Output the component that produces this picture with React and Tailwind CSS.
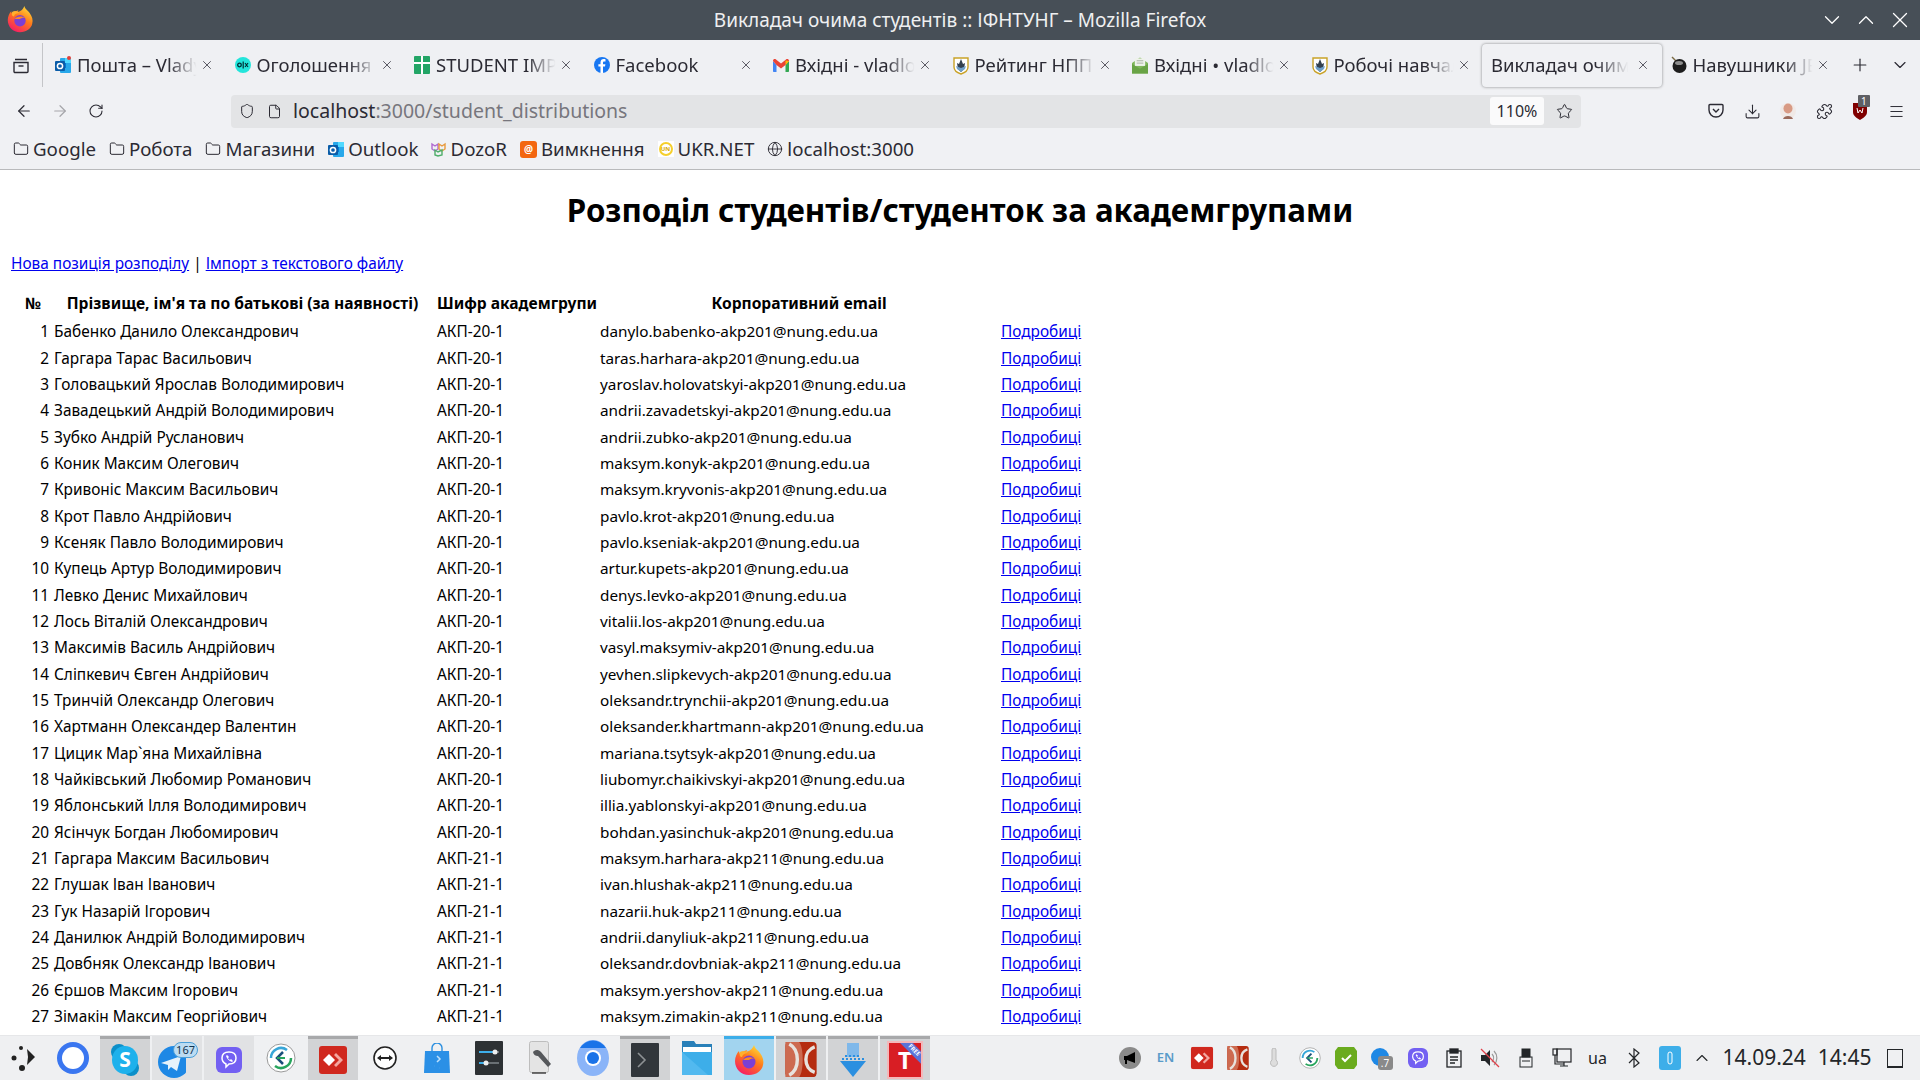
import {
  ArrowLeft,
  ArrowRight,
  ChevronDown,
  ChevronUp,
  Download,
  File,
  Folder,
  Globe,
  Menu,
  Plus,
  Puzzle,
  RotateCw,
  Shield,
  Star,
  X,
} from 'lucide-react';

const students = [
  ['Бабенко Данило Олександрович', 'АКП-20-1', 'danylo.babenko-akp201@nung.edu.ua'],
  ['Гаргара Тарас Васильович', 'АКП-20-1', 'taras.harhara-akp201@nung.edu.ua'],
  ['Головацький Ярослав Володимирович', 'АКП-20-1', 'yaroslav.holovatskyi-akp201@nung.edu.ua'],
  ['Завадецький Андрій Володимирович', 'АКП-20-1', 'andrii.zavadetskyi-akp201@nung.edu.ua'],
  ['Зубко Андрій Русланович', 'АКП-20-1', 'andrii.zubko-akp201@nung.edu.ua'],
  ['Коник Максим Олегович', 'АКП-20-1', 'maksym.konyk-akp201@nung.edu.ua'],
  ['Кривоніс Максим Васильович', 'АКП-20-1', 'maksym.kryvonis-akp201@nung.edu.ua'],
  ['Крот Павло Андрійович', 'АКП-20-1', 'pavlo.krot-akp201@nung.edu.ua'],
  ['Ксеняк Павло Володимирович', 'АКП-20-1', 'pavlo.kseniak-akp201@nung.edu.ua'],
  ['Купець Артур Володимирович', 'АКП-20-1', 'artur.kupets-akp201@nung.edu.ua'],
  ['Левко Денис Михайлович', 'АКП-20-1', 'denys.levko-akp201@nung.edu.ua'],
  ['Лось Віталій Олександрович', 'АКП-20-1', 'vitalii.los-akp201@nung.edu.ua'],
  ['Максимів Василь Андрійович', 'АКП-20-1', 'vasyl.maksymiv-akp201@nung.edu.ua'],
  ['Сліпкевич Євген Андрійович', 'АКП-20-1', 'yevhen.slipkevych-akp201@nung.edu.ua'],
  ['Тринчій Олександр Олегович', 'АКП-20-1', 'oleksandr.trynchii-akp201@nung.edu.ua'],
  ['Хартманн Олександер Валентин', 'АКП-20-1', 'oleksander.khartmann-akp201@nung.edu.ua'],
  ['Цицик Мар`яна Михайлівна', 'АКП-20-1', 'mariana.tsytsyk-akp201@nung.edu.ua'],
  ['Чайківський Любомир Романович', 'АКП-20-1', 'liubomyr.chaikivskyi-akp201@nung.edu.ua'],
  ['Яблонський Ілля Володимирович', 'АКП-20-1', 'illia.yablonskyi-akp201@nung.edu.ua'],
  ['Ясінчук Богдан Любомирович', 'АКП-20-1', 'bohdan.yasinchuk-akp201@nung.edu.ua'],
  ['Гаргара Максим Васильович', 'АКП-21-1', 'maksym.harhara-akp211@nung.edu.ua'],
  ['Глушак Іван Іванович', 'АКП-21-1', 'ivan.hlushak-akp211@nung.edu.ua'],
  ['Гук Назарій Ігорович', 'АКП-21-1', 'nazarii.huk-akp211@nung.edu.ua'],
  ['Данилюк Андрій Володимирович', 'АКП-21-1', 'andrii.danyliuk-akp211@nung.edu.ua'],
  ['Довбняк Олександр Іванович', 'АКП-21-1', 'oleksandr.dovbniak-akp211@nung.edu.ua'],
  ['Єршов Максим Ігорович', 'АКП-21-1', 'maksym.yershov-akp211@nung.edu.ua'],
  ['Зімакін Максим Георгійович', 'АКП-21-1', 'maksym.zimakin-akp211@nung.edu.ua'],
];

const FirefoxLogo = ({ size = 28 }) => (
  <svg width={size} height={size} viewBox="0 0 32 32">
    <defs>
      <linearGradient id="ffa" x1="0.8" y1="0" x2="0.2" y2="1">
        <stop offset="0" stopColor="#ffe03a" />
        <stop offset="0.45" stopColor="#ff7a1a" />
        <stop offset="1" stopColor="#f5156c" />
      </linearGradient>
    </defs>
    <path d="M21 1c1 4 4 5 6 8 3 4 4 8 3 12-1 6-7 10-14 10C8 31 2 25 2 17c0-4 2-8 4-10 0 2 1 3 2 4 1-3 3-4 6-5 0 1-1 2-1 2 3-1 6-2 8-7z" fill="url(#ffa)" />
    <path d="M7 8c3-2 6-1 8 1-3 0-5 1-6 4-2 0-3-2-2-5z" fill="#ffb02e" />
    <circle cx="16" cy="18" r="6.5" fill="#7b3fd4" />
    <path d="M10 16c2-3 8-4 12-1-2-1-5 0-6 1l-6 0z" fill="#ff8a1e" />
  </svg>
);

const OutlookIcon = () => (
  <svg width="16" height="17" viewBox="0 0 16 17">
    <rect x="5" y="1" width="11" height="15" rx="1" fill="#28a8ea" />
    <rect x="10" y="1" width="6" height="5" fill="#50d9ff" />
    <rect x="5" y="6" width="6" height="5" fill="#0078d4" />
    <rect x="0" y="4" width="10" height="10" rx="1" fill="#0a5ca8" />
    <circle cx="5" cy="9" r="2.6" fill="none" stroke="#fff" strokeWidth="1.5" />
  </svg>
);

const ShieldFav = () => (
  <svg width="16" height="19" viewBox="0 0 16 19">
    <path d="M1 2h14v9c0 4-4 6-7 7-3-1-7-3-7-7z" fill="#fff" stroke="#c9a227" strokeWidth="1.4" />
    <path d="M8 3l2 5 2-1-1 6-3 3-3-3-1-6 2 1z" fill="#33404f" />
    <path d="M3 10l5 2 5-2-1 3-4 3-4-3z" fill="#6f9fc8" />
  </svg>
);

const favicons = {
  outlook: (
    <span className="relative flex">
      <OutlookIcon />
      <span className="absolute -top-[1px] right-0 h-[4px] w-[4px] rounded-full bg-[#e0403a]" />
    </span>
  ),
  olx: (
    <svg width="16" height="16" viewBox="0 0 16 16">
      <circle cx="8" cy="8" r="8" fill="#23e5db" />
      <circle cx="4.5" cy="8" r="1.8" fill="none" stroke="#002f34" strokeWidth="1.3" />
      <rect x="7.6" y="4.5" width="1.2" height="7" fill="#002f34" />
      <path d="M10 6l3 4M13 6l-3 4" stroke="#002f34" strokeWidth="1.2" />
    </svg>
  ),
  sheets: (
    <svg width="16" height="18" viewBox="0 0 16 18">
      <rect width="16" height="18" rx="1" fill="#23a566" />
      <path d="M0 7h16M8 0v18" stroke="#fff" strokeWidth="2" />
    </svg>
  ),
  facebook: (
    <svg width="16" height="16" viewBox="0 0 16 16">
      <circle cx="8" cy="8" r="8" fill="#1877f2" />
      <path d="M9 16V9.6h2l.4-2.4H9V5.7c0-.8.3-1.3 1.3-1.3h1.2V2.3C11 2.2 10.400 2.100 9.700 2.100 7.800 2.100 6.500 3.300 6.500 5.400v1.800H4.400v2.400h2.100V16z" fill="#fff" />
    </svg>
  ),
  gmail: (
    <svg width="16" height="13" viewBox="0 0 16 13">
      <path d="M0 2v10c0 .6.4 1 1 1h2.500V6z" fill="#4285f4" />
      <path d="M12.500 13H15c.6 0 1-.4 1-1V2l-3.500 4z" fill="#34a853" />
      <path d="M0 2c0-2 2-2.500 3-1.500L8 4.500 13 .5c1-1 3-.5 3 1.500l-3.500 4L8 9.500 3.500 6z" fill="#ea4335" />
      <path d="M12.500 6V1.500L16 2z" fill="#fbbc04" />
    </svg>
  ),
  shield: <ShieldFav />,
  mail: (
    <svg width="17" height="18" viewBox="0 0 17 18">
      <path d="M0 7l8.500-6L17 7v11H0z" fill="#7fb65a" />
      <rect x="3" y="2" width="11" height="8" fill="#eef2ea" />
      <path d="M5 4.500h7M5 7h7" stroke="#a7b0a2" strokeWidth="1" />
      <path d="M0 8l8.500 5L17 8v10H0z" fill="#69a345" />
    </svg>
  ),
  bomb: (
    <svg width="16" height="18" viewBox="0 0 16 18">
      <path d="M1 1l4 4" stroke="#7a6a45" strokeWidth="1.4" />
      <circle cx="8.500" cy="10" r="7" fill="#1d1d1d" />
      <ellipse cx="8" cy="7" rx="4" ry="2" fill="#8e8e8e" />
    </svg>
  ),
};

const tabs = [
  ['outlook', 'Пошта – Vladyslav'],
  ['olx', 'Оголошення на OLX'],
  ['sheets', 'STUDENT IMPORT'],
  ['facebook', 'Facebook'],
  ['gmail', 'Вхідні - vladlo@gmail'],
  ['shield', 'Рейтинг НПП ІФНТУНГ'],
  ['mail', 'Вхідні • vladlo@ukr'],
  ['shield', 'Робочі навчальні плани'],
  [null, 'Викладач очима студентів', true],
  ['bomb', 'Навушники JBL Tune'],
];

const Tab = ({ icon, label, active }) => (
  <div
    className={`relative flex h-[43px] w-[179.5px] shrink-0 items-center ${
      active ? 'w-[177px] rounded-[4px] bg-[#f0f1f4] pl-[9px] shadow-[0_0_3px_rgba(0,0,0,0.45)]' : 'pl-[9px]'
    }`}
  >
    {icon && <span className="mr-[6px] flex w-[16px] shrink-0 justify-center">{favicons[icon]}</span>}
    <span
      className={`overflow-hidden text-[18.5px] whitespace-nowrap text-[#2b2a33] ${
        active ? 'w-[140px]' : 'w-[122px]'
      } [mask-image:linear-gradient(to_right,black_75%,transparent_98%)]`}
    >
      {label}
    </span>
    <X size={14} strokeWidth={1.4} className="absolute left-[154px] text-[#3a3944]" />
  </div>
);

const Bookmark = ({ icon, label }) => (
  <div className="flex items-center gap-[4px]">
    {icon}
    <span className="text-[18.7px] leading-none text-[#2b2a33]">{label}</span>
  </div>
);

const folder = <Folder size={16} strokeWidth={1.5} className="text-[#2b2a33]" />;

const NavButton = ({ children }) => <div className="flex h-[32px] w-9 items-center justify-center text-[#2b2a33]">{children}</div>;

// Taskbar pictures
const Launcher = () => (
  <svg width="26" height="26" viewBox="0 0 26 26">
    <circle cx="10" cy="3" r="2" fill="#222" />
    <circle cx="3" cy="13" r="2.500" fill="#222" />
    <circle cx="11" cy="23" r="3" fill="#222" />
    <path d="M16 4l8 8-8 8 1-8z" fill="#222" />
  </svg>
);

const Signal = () => (
  <svg width="32" height="32" viewBox="0 0 32 32">
    <circle cx="16" cy="16" r="16" fill="#3a76f0" />
    <circle cx="16" cy="16" r="11" fill="#fff" />
  </svg>
);

const Skype = () => (
  <svg width="30" height="34" viewBox="0 0 30 34">
    <circle cx="9" cy="9" r="8" fill="#0b8fc9" />
    <circle cx="21" cy="25" r="8" fill="#0b8fc9" />
    <ellipse cx="15" cy="17" rx="13" ry="14" fill="#1eb1ec" />
    <text x="15" y="24" textAnchor="middle" fontFamily="Noto Sans" fontWeight="700" fontSize="21" fill="#fff">
      S
    </text>
  </svg>
);

const Telegram = () => (
  <div className="relative h-[36px] w-[38px]">
    <svg width="28" height="32" viewBox="0 0 28 32" className="absolute top-[4px] left-0">
      <circle cx="16" cy="16" r="16" fill="#1e88e5" />
      <path d="M3 17l20-7-4 15-6-4-3 3v-5z" fill="#e6f2fb" />
    </svg>
    <span className="absolute top-0 right-[-2px] rounded-full border border-[#4a9fd8] bg-[#bcdcf2] px-[2px] text-[11px] leading-[14px] text-[#12334d]">
      167
    </span>
  </div>
);

const Viber = ({ size = 26 }) => (
  <svg width={size} height={size} viewBox="0 0 26 26">
    <rect width="26" height="26" rx="6" fill="#7360f2" />
    <path d="M6 11c0-4 3-6 7-6s7 2 7 6-3 6-7 6l-3 3v-3c-2-1-4-3-4-6z" fill="none" stroke="#fff" strokeWidth="1.500" />
    <path d="M10 9c1 3 3 5 6 6l1-1-2-2-1 1c-1-.5-2-1.500-2-2l1-1-2-2z" fill="#fff" />
  </svg>
);

const ArrowSync = ({ size = 30 }) => (
  <svg width={size} height={size} viewBox="0 0 30 30">
    <circle cx="15" cy="15" r="14" fill="#fff" stroke="#9a9a9a" />
    <path d="M5 15a10 10 0 0 1 16-8" fill="none" stroke="#38a6d8" strokeWidth="2.500" />
    <path d="M25 15a10 10 0 0 1-16 8" fill="none" stroke="#27a55d" strokeWidth="2.500" />
    <path d="M17 9l-6 6 6 6" fill="none" stroke="#1a4f7a" strokeWidth="2.500" />
    <path d="M11 15h8" stroke="#27a55d" strokeWidth="2" />
  </svg>
);

const AnyDesk = () => (
  <svg width="28" height="28" viewBox="0 0 28 28">
    <rect width="28" height="28" rx="3" fill="#d0281e" />
    <path d="M10 8l6 6-6 6-6-6z" fill="#fff" />
    <path d="M17 7l7 7-7 7-2-2 5-5-5-5z" fill="#f3a7a0" />
  </svg>
);

const TeamViewer = () => (
  <svg width="24" height="24" viewBox="0 0 24 24">
    <circle cx="12" cy="12" r="11" fill="#fff" stroke="#222" strokeWidth="1.600" />
    <path d="M4 12l4-3v2h8V9l4 3-4 3v-2H8v2z" fill="#222" />
  </svg>
);

const Store = () => (
  <svg width="26" height="30" viewBox="0 0 26 30">
    <path d="M8 8V5a5 5 0 0 1 10 0v3" fill="none" stroke="#2b8fe0" strokeWidth="1.400" />
    <path d="M1 8h24l1 22H0z" fill="#2b90e6" />
    <path d="M13 13l3 3-3 3M10 23h.1M15 25h.1" stroke="#bfe0fb" strokeWidth="1.500" fill="none" />
  </svg>
);

const Sliders = () => (
  <svg width="28" height="34" viewBox="0 0 28 34">
    <rect width="28" height="34" rx="1" fill="#2d3134" />
    <path d="M4 11h20M4 22h20" stroke="#6a7074" strokeWidth="2" />
    <path d="M4 11h16M4 22h7" stroke="#3daee9" strokeWidth="2" />
    <circle cx="20" cy="11" r="2.500" fill="#eee" />
    <circle cx="11" cy="22" r="2.500" fill="#eee" />
  </svg>
);

const DiskTool = () => (
  <svg width="24" height="34" viewBox="0 0 24 34">
    <rect x="0.500" y="0.500" width="19" height="31" rx="2" fill="#e4e4e4" stroke="#bdbdbd" />
    <path d="M5 10a5 5 0 0 1 7 1l10 12-3 3L9 15a5 5 0 0 1-5-4z" fill="#55575a" />
    <path d="M3 32h14" stroke="#444" strokeWidth="1.500" />
  </svg>
);

const ChromeLike = () => (
  <svg width="32" height="36" viewBox="0 0 32 36">
    <ellipse cx="16" cy="18" rx="16" ry="18" fill="#8ab4f8" />
    <path d="M3 8a16 18 0 0 1 26 0H16z" fill="#1a73e8" />
    <circle cx="16" cy="18" r="8" fill="#fff" />
    <circle cx="16" cy="18" r="6" fill="#1a73e8" />
  </svg>
);

const Terminal = () => (
  <svg width="28" height="34" viewBox="0 0 28 34">
    <rect width="28" height="34" rx="1" fill="#31363b" />
    <path d="M7 10l7 7-7 7" fill="none" stroke="#8d9194" strokeWidth="1.600" />
  </svg>
);

const Files = () => (
  <svg width="30" height="34" viewBox="0 0 30 34">
    <path d="M0 0h12l2 3h16v31H0z" fill="#2980b9" />
    <rect x="1" y="6" width="28" height="5" fill="#fff" />
    <path d="M0 11h30v23H0z" fill="#3daee9" />
    <path d="M0 11l26 23H0z" fill="#52b9ef" />
  </svg>
);

const DoubleC = ({ size = 32 }) => (
  <svg width={size} height={size * 1.1} viewBox="0 0 32 36">
    <rect width="32" height="36" rx="4" fill="#b52c10" />
    <path d="M0 0h14c5 5 5 31 0 36H0z" fill="#cd6a50" />
    <path d="M4 2c11 6 11 26 0 32M30 5c-12 4-12 22 0 26" fill="none" stroke="#e8e2dd" strokeWidth="3.500" />
  </svg>
);

const Downloader = () => (
  <svg width="28" height="34" viewBox="0 0 28 34">
    <rect x="8" y="0" width="12" height="14" fill="#7fb8ea" />
    <path d="M1 18h26L14 34z" fill="#2b8fe0" />
    <path d="M3 16h22M6 13h16" stroke="#2b8fe0" strokeWidth="2" strokeDasharray="2 2" />
  </svg>
);

const TFree = () => (
  <div className="relative flex h-[34px] w-[32px] items-center justify-center overflow-hidden bg-[#d81e24] shadow-[0_0_0_2px_#f3b8ba]">
    <span className="text-[24px] leading-none font-bold text-white">T</span>
    <span className="absolute top-[3px] right-[-9px] w-[32px] rotate-45 bg-[#5a74d8] text-center text-[6px] leading-[9px] font-bold text-white">
      FREE
    </span>
  </div>
);

const apps = [
  [<Signal key="a" />, ''],
  [<Skype key="a" />, 'open'],
  [<Telegram key="a" />, 'light'],
  [<Viber key="a" />, 'light'],
  [<ArrowSync key="a" />, ''],
  [<AnyDesk key="a" />, 'open'],
  [<TeamViewer key="a" />, ''],
  [<Store key="a" />, ''],
  [<Sliders key="a" />, ''],
  [<DiskTool key="a" />, ''],
  [<ChromeLike key="a" />, ''],
  [<Terminal key="a" />, 'open'],
  [<Files key="a" />, ''],
  [<FirefoxLogo key="a" size={32} />, 'active'],
  [<DoubleC key="a" />, 'open'],
  [<Downloader key="a" />, 'open'],
  [<TFree key="a" />, 'open'],
];

const slotStyles = {
  '': '',
  open: 'bg-[#d2d3d5] border-t-[3px] border-[#a8a9ab]',
  light: 'bg-[#e1e2e4] border-t-[3px] border-[#e1e2e4]',
  active: 'bg-[#a2d4ef] border-t-[3px] border-[#3daee9]',
};

const trayClass = 'flex h-[34px] w-9 items-center justify-center text-[#232629]';

const tray = [
  <div key="1" className="flex h-[22px] w-[22px] items-center justify-center rounded-full bg-[#8a8a8a]">
    <svg width="14" height="14" viewBox="0 0 14 14">
      <path d="M1 5h3l8-4v11L4 9v4H2V9H1z" fill="#000" />
    </svg>
  </div>,
  <span key="2" className="text-[13px] font-semibold text-[#5a9bc9]">
    EN
  </span>,
  <div key="3" className="scale-[0.8]">
    <AnyDesk />
  </div>,
  <DoubleC key="4" size={22} />,
  <svg key="5" width="10" height="20" viewBox="0 0 10 20">
    <path d="M3 2a2 2 0 0 1 4 0v10a3.500 3.500 0 1 1-4 0z" fill="#ddd" stroke="#bbb" />
  </svg>,
  <ArrowSync key="6" size={22} />,
  <svg key="7" width="22" height="24" viewBox="0 0 22 24">
    <path d="M3 1h16l3 4v14l-3 4H3l-3-4V5z" fill="#6aab1e" />
    <path d="M7 12l3 3 6-6" fill="none" stroke="#fff" strokeWidth="2" />
  </svg>,
  <div key="8" className="relative h-[24px] w-[22px]">
    <span className="absolute top-[2px] left-0 h-[18px] w-[18px] rounded-full bg-[#1e88e5]" />
    <span className="absolute right-0 bottom-0 h-[14px] w-[15px] rounded-[3px] bg-[#8a8a8a] text-center text-[10px] leading-[14px] text-white">
      .7
    </span>
  </div>,
  <div key="9" className="overflow-hidden rounded-[6px]">
    <Viber size={20} />
  </div>,
  <svg key="10" width="16" height="20" viewBox="0 0 16 20" fill="none" stroke="#232629" strokeWidth="1.300">
    <rect x="1" y="3" width="14" height="16" />
    <rect x="4" y="1" width="8" height="4" fill="#232629" />
    <path d="M4 9h8M4 12h8M4 15h5" />
  </svg>,
  <svg key="11" width="20" height="20" viewBox="0 0 20 20">
    <path d="M1 7h4l5-5v16l-5-5H1z" fill="#232629" />
    <path d="M12 6a6 6 0 0 1 0 8M14 3a10 10 0 0 1 0 14" fill="none" stroke="#999" strokeWidth="1.200" />
    <path d="M1 1l18 18" stroke="#e0404a" strokeWidth="1.200" />
  </svg>,
  <svg key="12" width="14" height="20" viewBox="0 0 14 20" fill="none" stroke="#232629">
    <rect x="3" y="1" width="8" height="8" fill="#232629" />
    <rect x="1" y="9" width="12" height="10" />
    <path d="M3 13h8" />
  </svg>,
  <svg key="13" width="20" height="20" viewBox="0 0 20 20" fill="none" stroke="#232629" strokeWidth="1.200">
    <rect x="5" y="1" width="14" height="13" />
    <rect x="1" y="1" width="4" height="6" />
    <path d="M3 7v9h9M12 14v4M8 18h8" />
  </svg>,
  <span key="14" className="text-[16px] text-[#232629]">
    ua
  </span>,
  <svg key="15" width="12" height="20" viewBox="0 0 12 20" fill="none" stroke="#232629" strokeWidth="1.200">
    <path d="M1 5l10 10-5 4V1l5 4L1 15" />
  </svg>,
  <svg key="16" width="22" height="24" viewBox="0 0 22 24">
    <rect width="22" height="24" rx="3" fill="#3daee9" />
    <rect x="9" y="6" width="4" height="12" rx="2" fill="none" stroke="#fff" strokeWidth="1" />
  </svg>,
];

const App = () => {
  return (
    <div className="flex h-screen flex-col overflow-hidden bg-white font-['Noto_Sans',sans-serif] text-black">
      {/* title bar */}
      <div className="relative flex h-10 shrink-0 items-center justify-center bg-[#474f57] text-[19px] text-[#eff0f1]">
        <div className="absolute top-[5px] left-[6px]">
          <FirefoxLogo />
        </div>
        <span>Викладач очима студентів :: ІФНТУНГ – Mozilla Firefox</span>
        <div className="absolute right-[7px] flex items-center text-white">
          <ChevronDown size={26} strokeWidth={1.2} className="mr-[8px]" />
          <ChevronUp size={26} strokeWidth={1.2} className="mr-[8px]" />
          <X size={26} strokeWidth={1.2} />
        </div>
      </div>

      {/* tab bar */}
      <div className="flex h-[50px] shrink-0 items-center bg-[#eff0f3]">
        <div className="flex h-[44px] w-[43px] shrink-0 items-center justify-center border-r border-[#c4c5c8]">
          <svg width="18" height="18" viewBox="0 0 18 18" fill="none" stroke="#2b2a33" strokeWidth="1.400">
            <path d="M3 3.500h12M2 6.500h14v9a1 1 0 0 1-1 1H3a1 1 0 0 1-1-1z" />
            <path d="M6.500 10h5" />
          </svg>
        </div>
        <div className="ml-[3px] flex">
          {tabs.map(([icon, label, active]) => (
            <Tab key={label} icon={icon} label={label} active={active} />
          ))}
        </div>
        <Plus size={20} strokeWidth={1.4} className="ml-[9px] text-[#2b2a33]" />
        <ChevronDown size={20} strokeWidth={1.4} className="ml-[20px] text-[#2b2a33]" />
      </div>

      {/* nav bar */}
      <div className="flex h-[38px] shrink-0 items-center bg-[#f0f1f4] pt-[4px] pl-[6px]">
        <NavButton>
          <ArrowLeft size={18} strokeWidth={1.6} />
        </NavButton>
        <NavButton>
          <ArrowRight size={18} strokeWidth={1.6} className="text-[#a5a5a9]" />
        </NavButton>
        <NavButton>
          <RotateCw size={16} strokeWidth={1.6} />
        </NavButton>
        <div className="ml-[117px] flex h-[33px] min-w-0 flex-1 items-center rounded-[4px] bg-[#e3e4e6] pl-[8px]">
          <Shield size={16} strokeWidth={1.5} className="text-[#2b2a33]" />
          <File size={15} strokeWidth={1.6} className="ml-[12px] text-[#2b2a33]" />
          <span className="ml-[11px] flex-1 text-[19.5px] text-[#2b2a33]">
            localhost<span className="text-[#77767d]">:3000/student_distributions</span>
          </span>
          <span className="w-[54px] rounded-[3px] bg-[#fafafb] py-[2px] text-center text-[16px] text-[#2b2a33]">110%</span>
          <Star size={17} strokeWidth={1.4} className="mr-[8px] ml-[12px] text-[#2b2a33]" />
        </div>
        <div className="ml-[117px] flex pr-[6px]">
          <NavButton>
            <svg width="16" height="16" viewBox="0 0 16 16" fill="none" stroke="#2b2a33" strokeWidth="1.400">
              <path d="M2 1.500h12a1 1 0 0 1 1 1V7a7 7 0 0 1-14 0V2.500a1 1 0 0 1 1-1z" />
              <path d="M5 6l3 3 3-3" />
            </svg>
          </NavButton>
          <NavButton>
            <Download size={17} strokeWidth={1.5} />
          </NavButton>
          <NavButton>
            <svg width="16" height="20" viewBox="0 0 16 20">
              <circle cx="8" cy="10" r="8" fill="#f0e9e6" />
              <ellipse cx="8" cy="7.500" rx="4.500" ry="5" fill="#d89a84" />
              <path d="M3 18c1-4 9-4 10 0z" fill="#9a6a5a" />
            </svg>
          </NavButton>
          <NavButton>
            <Puzzle size={17} strokeWidth={1.5} />
          </NavButton>
          <NavButton>
            <div className="relative">
              <svg width="14" height="18" viewBox="0 0 14 18">
                <path d="M0 1h14v9c0 4-4 6-7 8-3-2-7-4-7-8z" fill="#800000" />
                <path d="M4 6l1 5 2-3 2 3 1-5" fill="none" stroke="#fff" strokeWidth="1" />
              </svg>
              <span className="absolute -top-[7px] left-[5px] rounded-[1px] bg-[#5f6064] px-[3px] text-[10px] leading-[12px] text-white">
                1
              </span>
            </div>
          </NavButton>
          <NavButton>
            <Menu size={17} strokeWidth={1.4} />
          </NavButton>
        </div>
      </div>

      {/* bookmarks */}
      <div className="flex h-[42px] shrink-0 items-center gap-[13px] border-b border-[#b9babc] bg-[#f0f1f4] pt-[2px] pl-[13px]">
        <Bookmark icon={folder} label="Google" />
        <Bookmark icon={folder} label="Робота" />
        <Bookmark icon={folder} label="Магазини" />
        <Bookmark icon={<OutlookIcon />} label="Outlook" />
        <Bookmark
          icon={
            <svg width="15" height="15" viewBox="0 0 15 15" fill="none" strokeWidth="1.400">
              <path d="M1 2l3 2 3-2v5l-3 2-3-2z" stroke="#b06ad0" />
              <path d="M8 2l3 2 3-2v5l-3 2-3-2z" stroke="#e89a3c" />
              <path d="M4 8l3 2 4-2v5l-4 1-3-1z" stroke="#4fae6a" />
            </svg>
          }
          label="DozoR"
        />
        <Bookmark
          icon={
            <span className="flex h-[17px] w-[17px] items-center justify-center rounded-[3px] bg-[#f3660f] text-[10px] leading-none font-bold text-white">
              @
            </span>
          }
          label="Вимкнення"
        />
        <Bookmark
          icon={
            <span className="flex h-[16px] w-[16px] items-center justify-center bg-white">
              <span className="flex h-[14px] w-[14px] items-center justify-center rounded-full border-2 border-[#f5cf2c] text-[6px] leading-none font-bold text-[#d8a800]">
                UN
              </span>
            </span>
          }
          label="UKR.NET"
        />
        <Bookmark icon={<Globe size={16} strokeWidth={1.4} className="text-[#2b2a33]" />} label="localhost:3000" />
      </div>

      {/* page */}
      <main className="min-h-0 flex-1 overflow-hidden bg-white">
        <h1 className="mt-[18px] text-center text-[31.3px] leading-[44px] font-bold">Розподіл студентів/студенток за академгрупами</h1>
        <p className="mt-[21px] ml-[11px] text-[15.4px] leading-[21px]">
          <a href="#new" className="text-[#0000ee] underline">
            Нова позиція розподілу
          </a>{' '}
          |{' '}
          <a href="#import" className="text-[#0000ee] underline">
            Імпорт з текстового файлу
          </a>
        </p>
        <table className="mt-[15px] ml-[25px] table-fixed border-collapse text-[15.4px] leading-[21px]">
          <colgroup>
            <col className="w-[29px]" />
            <col className="w-[383px]" />
            <col className="w-[163px]" />
            <col className="w-[401px]" />
            <col className="w-[90px]" />
          </colgroup>
          <thead>
            <tr className="h-[29.7px] text-[15.6px]">
              <th className="text-left font-bold">№</th>
              <th className="pr-[6px] text-center font-bold">Прізвище, ім'я та по батькові (за наявності)</th>
              <th className="text-left font-bold">Шифр академгрупи</th>
              <th className="pr-[3px] text-center font-bold">Корпоративний email</th>
              <th />
            </tr>
          </thead>
          <tbody>
            {students.map(([name, group, email], i) => (
              <tr key={email} className="h-[26.33px]">
                <td className="pr-[5px] text-right">{i + 1}</td>
                <td>{name}</td>
                <td>{group}</td>
                <td className="text-[15.3px]">{email}</td>
                <td>
                  <a href="#details" className="text-[#0000ee] underline">
                    Подробиці
                  </a>
                </td>
              </tr>
            ))}
          </tbody>
        </table>
      </main>

      {/* taskbar */}
      <footer className="flex h-[45px] shrink-0 border-t border-[#e6e7e9] bg-[#eff0f2]">
        <div className="flex w-[48px] shrink-0 items-center justify-center">
          <Launcher />
        </div>
        {apps.map(([icon, state], i) => (
          <div key={i} className="mr-[2px] flex w-[50px] shrink-0 items-center justify-center">
            <div className={`flex h-full w-full items-center justify-center ${slotStyles[state]}`}>{icon}</div>
          </div>
        ))}
        <div className="ml-[179.5px] flex items-center">
          {tray.map((item, i) => (
            <div key={i} className={trayClass}>
              {item}
            </div>
          ))}
          <ChevronUp size={20} strokeWidth={1.3} className="ml-[4px] text-[#232629]" />
          <span className="ml-[11px] text-[21px] whitespace-nowrap text-[#232629]">14.09.24</span>
          <span className="ml-[12px] text-[21px] whitespace-nowrap text-[#232629]">14:45</span>
          <div className="ml-[15px] h-[19px] w-[16px] border border-b-[2px] border-[#232629]" />
        </div>
      </footer>
    </div>
  );
};

export default App;
